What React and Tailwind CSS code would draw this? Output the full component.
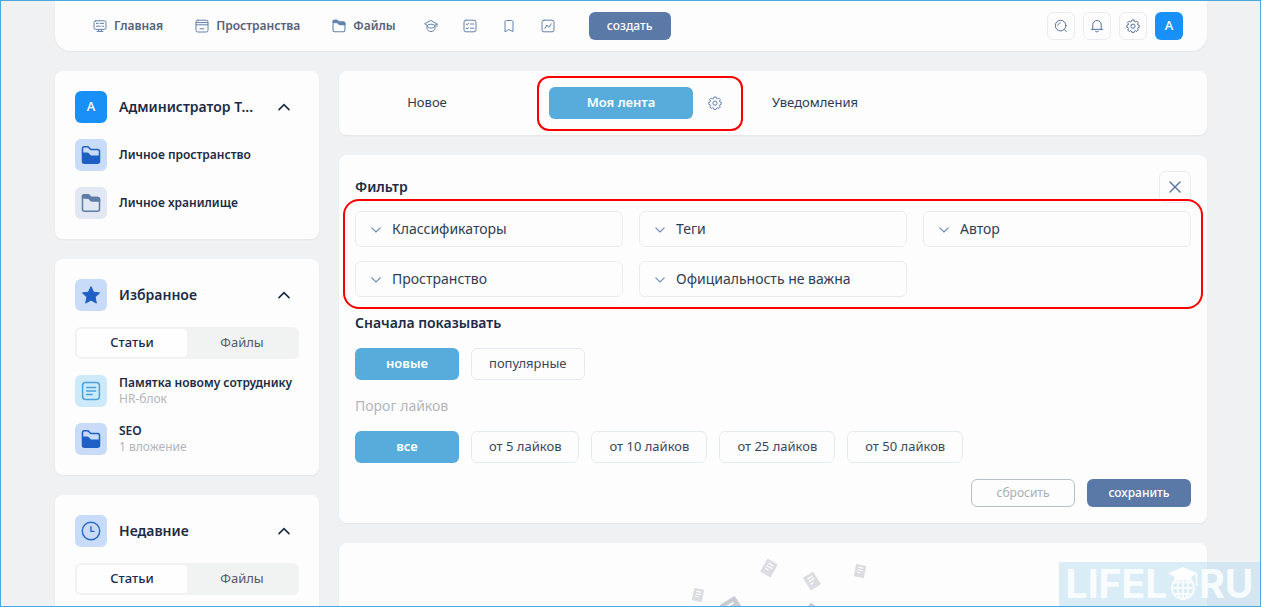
import React, { useState } from 'react';

const MonitorIcon = () => (
  <svg viewBox="0 0 14 14" className="h-3.5 w-3.5" fill="none" stroke="currentColor" strokeLinecap="round" strokeLinejoin="round">
    <rect x="1" y="1.8" width="12" height="8.6" rx="1.6" />
    <path d="M3.4 4.4h2M7.2 4.4h3.4M3.4 7.2h4M9.2 7.2h1.4M5.6 10.4v2M8.4 10.4v2M4 12.4h6" />
  </svg>
);

const SpacesIcon = () => (
  <svg viewBox="0 0 14 14" className="h-3.5 w-3.5" fill="none" stroke="currentColor" strokeLinecap="round" strokeLinejoin="round">
    <rect x="1" y="1.2" width="12" height="11.8" rx="1.8" />
    <path d="M1.2 3.6h11.6M1.2 5.8h11.6M5 9.8h4" />
  </svg>
);

const FolderIcon = ({ className }) => (
  <svg viewBox="0 0 20 20" className={className} fill="none" stroke="currentColor" strokeWidth="1.5" strokeLinejoin="round">
    <path d="M1.5 3.7c0-1.2.8-1.9 1.9-1.9h3.2c.8 0 1.3.3 1.7.9l.9 1.100c.3.4.7.6 1.200.6h6.200c1.100 0 1.900.8 1.900 1.900v9.900c0 1.200-.8 2-2 2h-13c-1.200 0-2-.8-2-2z" />
    <path d="M1.500 4.800V3.700c0-1.200.8-1.900 1.900-1.900h3.200c.8 0 1.300.3 1.700.9l.9 1.100c.3.4.7.6 1.200.6h6.200c1.100 0 1.900.8 1.900 1.900v1.700h-7.200c-.9 0-1.400-.3-1.900-.9l-.8-1.100c-.4-.5-.8-.7-1.400-.7z" fill="currentColor" />
  </svg>
);

const FolderFullIcon = () => (
  <svg viewBox="0 0 20 20" className="h-5 w-5" fill="none" stroke="currentColor" strokeWidth="1.5" strokeLinejoin="round">
    <path d="M1.500 8V3.600c0-1 .7-1.800 1.800-1.800h3c.8 0 1.300.3 1.700.9l.9 1c.4.500.8.7 1.400.7h6.200c1.200 0 2 .8 2 1.900V11" />
    <path d="M1.500 8.200h4.300c.8 0 1.300.3 1.800.9l1.200 1.400c.5.600 1 .8 1.800.8h7.900v4.900c0 1.200-.8 2-2 2h-13c-1.200 0-2-.8-2-2z" fill="currentColor" />
  </svg>
);

const CourseIcon = () => (
  <svg viewBox="0 0 14 14" className="h-3.5 w-3.5" fill="none" stroke="currentColor" strokeLinecap="round" strokeLinejoin="round">
    <path d="M7 1.500 13 4.900 10.600 6.400C9.600 5.600 8.400 5.200 7 5.200s-2.600.4-3.600 1.200L1 4.900z" />
    <path d="M3 6.400v2.900c0 1.800 1.800 3.200 4 3.200s4-1.400 4-3.200V6.400M3.400 7.600C4.200 8.500 5.500 9.100 7 9.100s2.800-.6 3.600-1.500M13 4.900v2.600" />
  </svg>
);

const TasksIcon = () => (
  <svg viewBox="0 0 14 14" className="h-3.5 w-3.5" fill="none" stroke="currentColor" strokeLinecap="round" strokeLinejoin="round">
    <rect x="1" y="1.200" width="12" height="11.600" rx="2" />
    <path d="m3.200 5 .9.8 1.400-1.600M7.400 5h3.400M3.200 9.200l.9.800 1.400-1.600M7.400 9.200h3.400" />
  </svg>
);

const BookmarkIcon = () => (
  <svg viewBox="0 0 14 14" className="h-3.5 w-3.5" fill="none" stroke="currentColor" strokeLinecap="round" strokeLinejoin="round">
    <path d="M3 12.500V3c0-.9.600-1.500 1.500-1.500h5c.9 0 1.500.6 1.500 1.500v9.500L7 10.700z" />
  </svg>
);

const ChartIcon = () => (
  <svg viewBox="0 0 14 14" className="h-3.5 w-3.5" fill="none" stroke="currentColor" strokeLinecap="round" strokeLinejoin="round">
    <rect x="1" y="1.200" width="12" height="11.600" rx="2" />
    <path d="M4 9.400 5.800 6l2 2.400L10.200 4.800" />
  </svg>
);

const SearchIcon = () => (
  <svg viewBox="0 0 14 14" className="h-3.5 w-3.5" fill="none" stroke="currentColor" strokeLinecap="round">
    <circle cx="6.600" cy="6.600" r="5.300" />
    <path d="m10.400 10.600 2 2M3.900 6.200c.2-1.200 1-2 2.200-2.200" />
  </svg>
);

const BellIcon = () => (
  <svg viewBox="0 0 14 14" className="h-3.5 w-3.5" fill="none" stroke="currentColor" strokeLinecap="round" strokeLinejoin="round">
    <path d="M2.800 10.400V5.500C2.800 3.200 4.600 1.500 7 1.500s4.200 1.700 4.200 4v4.900M1.500 10.400h11M5.600 12.400c.8.700 2 .7 2.800 0" />
  </svg>
);

const GearIcon = () => (
  <svg viewBox="0 0 14 14" className="h-3.5 w-3.5" fill="none" stroke="currentColor" strokeLinejoin="round">
    <path d="M5.900 1h2.200l.4 1.500.9.400 1.400-.8 1.500 1.500-.8 1.400.4.900 1.300.4v2l-1.300.4-.4 1 .8 1.300-1.500 1.500-1.400-.8-.9.400-.4 1.300H5.900l-.4-1.300-.9-.4-1.400.8-1.500-1.500.8-1.300-.4-1-1.300-.4v-2l1.300-.4.4-.9-.8-1.400 1.500-1.500 1.400.8.900-.4z" />
    <circle cx="7" cy="7.200" r="2.100" />
  </svg>
);

const ChevronUp = () => (
  <svg viewBox="0 0 14 8" className="h-2 w-3.5" fill="none" stroke="currentColor" strokeWidth="1.600" strokeLinecap="round">
    <path d="m2 6.600 5-5 5 5" />
  </svg>
);

const StarIcon = () => (
  <svg viewBox="0 0 20 20" className="h-5 w-5" fill="currentColor" stroke="currentColor" strokeLinejoin="round">
    <path d="m10 1.600 2.600 5.600 5.900.700-4.400 4.200 1.200 6L10 15.100 4.700 18.100l1.200-6L1.500 7.900l5.900-.7z" />
  </svg>
);

const ArticleIcon = () => (
  <svg viewBox="0 0 20 20" className="h-5 w-5" fill="none" stroke="currentColor" strokeWidth="1.500" strokeLinecap="round">
    <rect x="1.600" y="1.600" width="16.800" height="16.800" rx="2.800" />
    <path d="M5.600 6.400h9M5.600 10h9M5.600 13.600h5.600" />
  </svg>
);

const ClockIcon = () => (
  <svg viewBox="0 0 20 20" className="h-5 w-5" fill="none" stroke="currentColor" strokeWidth="1.400" strokeLinecap="round">
    <circle cx="10" cy="10" r="8.700" />
    <path d="M10 5.800V10.400h3" />
  </svg>
);

const NAV = [
  { label: 'Главная', icon: <MonitorIcon /> },
  { label: 'Пространства', icon: <SpacesIcon /> },
  { label: 'Файлы', icon: <FolderIcon className="h-3.5 w-3.5" /> },
];

const NAV_ICONS = [
  { label: 'Обучение', icon: <CourseIcon /> },
  { label: 'Задачи', icon: <TasksIcon /> },
  { label: 'Закладки', icon: <BookmarkIcon /> },
  { label: 'Аналитика', icon: <ChartIcon /> },
];

const TOOLS = [
  { label: 'Поиск', icon: <SearchIcon /> },
  { label: 'Оповещения', icon: <BellIcon /> },
  { label: 'Настройки', icon: <GearIcon /> },
];

const FILTERS = ['Классификаторы', 'Теги', 'Автор', 'Пространство', 'Официальность не важна'];
const LIKES = ['все', 'от 5 лайков', 'от 10 лайков', 'от 25 лайков', 'от 50 лайков'];

const Header = () => (
  <header className="flex h-[50px] items-center rounded-b-2xl bg-[#fdfdfd] pr-6 pl-[38px] shadow-xs">
    <nav className="flex items-center text-xs font-semibold text-[#56627a]">
      {NAV.map(item => (
        <a key={item.label} href="#" className="mr-8 flex items-center gap-[7px]">
          <span className="text-[#6382ad]">{item.icon}</span>
          {item.label}
        </a>
      ))}
      <div className="-ml-1 flex items-center gap-[25px] text-[#6382ad]">
        {NAV_ICONS.map(item => (
          <a key={item.label} href="#" aria-label={item.label}>{item.icon}</a>
        ))}
      </div>
    </nav>
    <button className="ml-[34px] h-7 w-[82px] rounded-md bg-[#5b79a6] text-xs font-medium text-white">создать</button>
    <div className="ml-auto flex gap-2">
      {TOOLS.map(tool => (
        <button key={tool.label} aria-label={tool.label} className="flex h-7 w-7 items-center justify-center rounded-md border border-[#e9edf3] text-[#54709b]">
          {tool.icon}
        </button>
      ))}
      <button className="h-7 w-7 rounded-md bg-[#1890f8] text-[13px] font-medium text-white">A</button>
    </div>
  </header>
);

const Panel = ({ title, badge, badgeClass, children }) => (
  <section className="flex flex-col gap-4 rounded-lg bg-[#fdfdfd] p-5 shadow-xs">
    <div className="flex items-center gap-3">
      <span className={`flex h-8 w-8 shrink-0 items-center justify-center rounded-md ${badgeClass}`}>{badge}</span>
      <h2 className="text-sm font-semibold">{title}</h2>
      <button aria-label="Свернуть" className="mr-2 ml-auto">
        <ChevronUp />
      </button>
    </div>
    {children}
  </section>
);

const Entry = ({ icon, iconClass, title, note }) => (
  <a href="#" className="flex h-8 items-center gap-3">
    <span className={`flex h-8 w-8 shrink-0 items-center justify-center rounded-md ${iconClass}`}>{icon}</span>
    <span className="text-xs leading-4 font-semibold whitespace-nowrap">
      {title}
      {note && <span className="block font-normal text-[#b1b5bc]">{note}</span>}
    </span>
  </a>
);

const Switcher = () => {
  const [tab, setTab] = useState('Статьи');
  return (
    <div className="flex h-8 rounded-md bg-[#f1f2f2] p-0.5 text-[13px]">
      {['Статьи', 'Файлы'].map(name => (
        <button
          key={name}
          onClick={() => setTab(name)}
          className={`flex-1 rounded ${tab === name ? 'bg-[#fefefe] font-medium' : 'text-[#535a68]'}`}
        >
          {name}
        </button>
      ))}
    </div>
  );
};

const Sidebar = () => (
  <aside className="flex w-[264px] shrink-0 flex-col gap-5">
    <Panel title="Администратор Т..." badge="A" badgeClass="bg-[#1890f8] text-[13px] font-medium text-white">
      <Entry icon={<FolderFullIcon />} iconClass="bg-[#c8dbf8] text-[#1e5fc4]" title="Личное пространство" />
      <Entry icon={<FolderIcon className="h-5 w-5" />} iconClass="bg-[#e1e8f4] text-[#5f7ca8]" title="Личное хранилище" />
    </Panel>
    <Panel title="Избранное" badge={<StarIcon />} badgeClass="bg-[#c8dbf8] text-[#1e5fc4]">
      <Switcher />
      <Entry icon={<ArticleIcon />} iconClass="bg-[#cdeafb] text-[#4ba1d8]" title="Памятка новому сотруднику" note="HR-блок" />
      <Entry icon={<FolderFullIcon />} iconClass="bg-[#c8dbf8] text-[#1e5fc4]" title="SEO" note="1 вложение" />
    </Panel>
    <Panel title="Недавние" badge={<ClockIcon />} badgeClass="bg-[#c8dbf8] text-[#2566c6]">
      <Switcher />
    </Panel>
  </aside>
);

const FeedTabs = () => (
  <div className="flex h-16 items-center rounded-lg bg-[#fdfdfd] px-4 text-[13px] shadow-xs">
    <button className="w-36 text-[#2b3a52]">Новое</button>
    <div className="ml-[38px] flex h-[55px] items-center rounded-xl border-2 border-[#fb0000] px-2.5">
      <button className="h-8 w-36 rounded-md bg-[#58acdb] font-semibold text-white">Моя лента</button>
      <button aria-label="Настройки ленты" className="ml-[15px] pr-[9px] text-[#6382ad]">
        <GearIcon />
      </button>
    </div>
    <button className="w-36 text-[#2b3a52]">Уведомления</button>
  </div>
);

const Chips = ({ options, label }) => {
  const [active, setActive] = useState(options[0]);
  return (
    <div role="group" aria-label={label} className="mt-[15px] flex gap-3 text-[13px]">
      {options.map(name => (
        <button
          key={name}
          onClick={() => setActive(name)}
          className={`h-8 rounded-md ${active === name ? 'w-[104px] bg-[#58acdb] font-semibold text-white' : 'border border-[#e6ebf3] px-[17px] text-[#3a475c]'}`}
        >
          {name}
        </button>
      ))}
    </div>
  );
};

const FilterCard = () => (
  <section className="rounded-lg bg-[#fdfdfd] p-4 shadow-xs">
    <div className="flex items-center justify-between">
      <h2 className="text-sm font-semibold">Фильтр</h2>
      <button aria-label="Закрыть" className="flex h-8 w-8 items-center justify-center rounded-md border border-[#e9edf3] text-[#54709b]">
        <svg viewBox="0 0 12 12" className="h-3 w-3" stroke="currentColor" strokeWidth="1.400" strokeLinecap="round">
          <path d="m1 1 10 10M11 1 1 11" />
        </svg>
      </button>
    </div>

    <div className="relative mt-2">
      <div className="grid grid-cols-3 gap-x-4 gap-y-3.5">
        {FILTERS.map(name => (
          <label key={name} className="relative block">
            <svg viewBox="0 0 10 6" className="absolute top-4 left-4 h-1.5 w-2.5 text-[#6e8ab3]" fill="none" stroke="currentColor" strokeWidth="1.200" strokeLinecap="round">
              <path d="m.8.800 4.200 4.200 4.200-4.200" />
            </svg>
            <select aria-label={name} className="block h-9 w-full appearance-none rounded-md border border-[#e9edf3] bg-transparent pr-4 pl-9 text-sm text-[#2f3d55]">
              <option>{name}</option>
            </select>
          </label>
        ))}
      </div>
      {/* highlight frame over the filter fields */}
      <div className="pointer-events-none absolute -inset-x-3 -top-3 -bottom-3 rounded-2xl border-2 border-[#fb0000]"></div>
    </div>

    <h3 className="mt-4 text-sm leading-5 font-semibold">Сначала показывать</h3>
    <Chips options={['новые', 'популярные']} label="Сначала показывать" />

    <h3 className="mt-4 text-sm leading-5 text-[#b1b5bc]">Порог лайков</h3>
    <Chips options={LIKES} label="Порог лайков" />

    <div className="mt-4 flex justify-end gap-3 text-xs">
      <button className="h-7 w-[104px] rounded-md border border-[#b9bfca] text-[#a9aeb7]">сбросить</button>
      <button className="h-7 w-[104px] rounded-md bg-[#5b79a6] font-medium text-white">сохранить</button>
    </div>
  </section>
);

// x, y, rotation, scale, colour
const SHEETS = [
  [149, 25, 30, 1, '#dcdde2'],
  [192, 38, -32, 1, '#dcdde2'],
  [240, 28, 12, 0.85, '#dcdde2'],
  [78, 52, 12, 0.85, '#dcdde2'],
  [113, 67, -32, 1.5, '#c9ccd3'],
  [191, 70, 40, 1.1, '#c9ccd3'],
];

const EmptyFeed = () => (
  <section className="rounded-lg bg-[#fdfdfd] shadow-xs">
    <svg viewBox="0 0 306 120" className="mx-auto h-[120px] w-[306px]">
      {SHEETS.map(([x, y, angle, scale, color]) => (
        <g key={x} transform={`translate(${x} ${y}) rotate(${angle}) scale(${scale})`}>
          <rect x="-6" y="-7.500" width="12" height="15" rx="1" fill={color} />
          <path d="M-3-4h6M-3-1h6M-3 2h3.500" stroke="#fff" strokeWidth="1.200" />
        </g>
      ))}
    </svg>
  </section>
);

const Watermark = () => (
  <div className="absolute right-0 bottom-0 flex h-11 w-[201px] items-center justify-center bg-[#b8dcf0]/50 font-['Inter',sans-serif] text-[39px] font-bold text-white/85">
    <span>LIFEL</span>
    <svg viewBox="0 0 32 36" className="h-9 w-8 shrink-0" fill="none" stroke="#fff" strokeWidth="1.600">
      <circle cx="16" cy="22" r="11" />
      <path d="M16 12v21M5 22h22M7 16.500h18M7 28h18" />
      <ellipse cx="16" cy="22" rx="5.500" ry="11" />
      <path d="M16 1 31 7.500 16 14 1 7.500z" fill="#fff" stroke="none" />
      <path d="M7.500 10v6c4-3 13-3 17 0v-6L16 14z" fill="#fff" stroke="none" />
      <path d="M29.500 8v10M29.500 17v3" strokeWidth="1.400" />
    </svg>
    <span>RU</span>
  </div>
);

export default function App() {
  return (
    <div className="relative h-screen overflow-hidden border border-[#4ba9dd] bg-[#eff1f3] pr-[53px] pl-[54px] font-['Noto_Sans','Open_Sans',sans-serif] text-[#1c2b45]">
      <Header />
      <div className="mt-5 flex gap-5">
        <Sidebar />
        <main className="flex min-w-0 flex-1 flex-col gap-5">
          <FeedTabs />
          <FilterCard />
          <EmptyFeed />
        </main>
      </div>
      <Watermark />
    </div>
  );
}
